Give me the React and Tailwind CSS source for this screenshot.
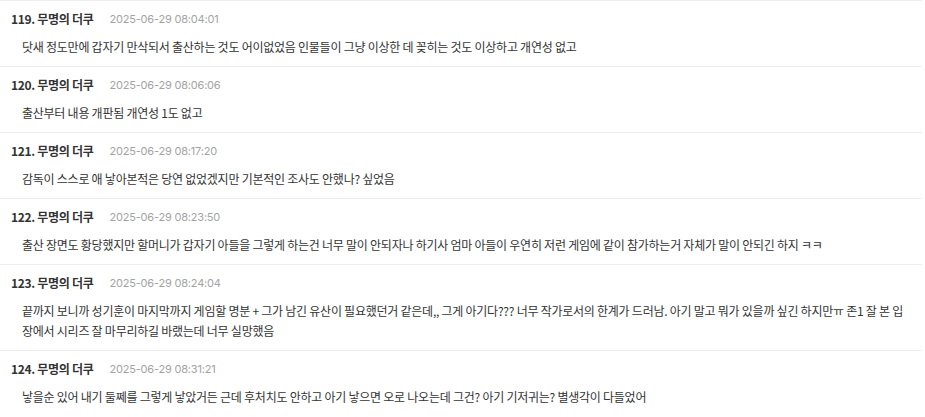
const comments = [
  {
    no: 119,
    date: '2025-06-29 08:04:01',
    text: '닷새 정도만에 갑자기 만삭되서 출산하는 것도 어이없었음 인물들이 그냥 이상한 데 꽂히는 것도 이상하고 개연성 없고',
  },
  {
    no: 120,
    date: '2025-06-29 08:06:06',
    text: '출산부터 내용 개판됨 개연성 1도 없고',
  },
  {
    no: 121,
    date: '2025-06-29 08:17:20',
    text: '감독이 스스로 애 낳아본적은 당연 없었겠지만 기본적인 조사도 안했나? 싶었음',
  },
  {
    no: 122,
    date: '2025-06-29 08:23:50',
    text: '출산 장면도 황당했지만 할머니가 갑자기 아들을 그렇게 하는건 너무 말이 안되자나 하기사 엄마 아들이 우연히 저런 게임에 같이 참가하는거 자체가 말이 안되긴 하지 ㅋㅋ',
  },
  {
    no: 123,
    date: '2025-06-29 08:24:04',
    text: '끝까지 보니까 성기훈이 마지막까지 게임할 명분 + 그가 남긴 유산이 필요했던거 같은데,, 그게 아기다??? 너무 작가로서의 한계가 드러남. 아기 말고 뭐가 있을까 싶긴 하지만ㅠ 존1 잘 본 입장에서 시리즈 잘 마무리하길 바랬는데 너무 실망했음',
  },
  {
    no: 124,
    date: '2025-06-29 08:31:21',
    text: '낳을순 있어 내기 둘쩨를 그렇게 낳았거든 근데 후처치도 안하고 아기 낳으면 오로 나오는데 그건? 아기 기저귀는? 별생각이 다들었어',
  },
]

const Comment = ({ c }) => (
  <div className="border-t border-[#eeeeee] pt-[10px] pb-[9px]">
    <div className="flex items-center h-4 pl-[11px]">
      <span className="text-[12px] font-bold text-[#333333] tracking-[-0.3px]">
        {c.no}. 무명의 더쿠
      </span>
      <span className="ml-[16px] text-[11px] text-[#a3a3a3] font-['Inter'] tracking-[-0.2px]">{c.date}</span>
    </div>
    <p className="mt-[10px] pl-[22px] pr-[12px] text-[12px] leading-5 text-[#333333] tracking-[-0.25px]">
      {c.text}
    </p>
  </div>
)

export default function App() {
  return (
    <div className="min-h-screen bg-white font-['Noto_Sans_CJK_KR','Noto_Sans',sans-serif]">
      <div className="w-[922px]">
        {comments.map((c) => (
          <Comment key={c.no} c={c} />
        ))}
      </div>
    </div>
  )
}
